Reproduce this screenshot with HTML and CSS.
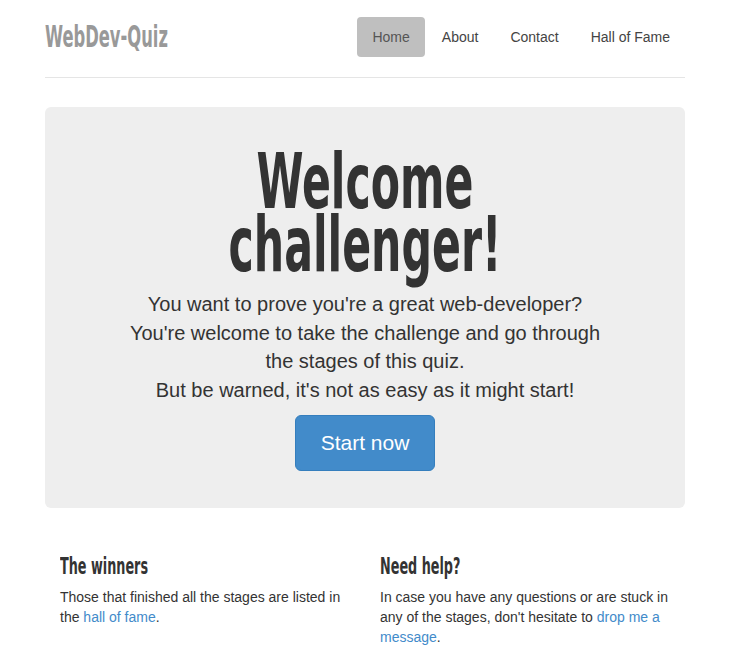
FILE: index.html
```html
<!DOCTYPE html>
<html lang="en">
<head>
    <meta charset="UTF-8">
    <meta name="viewport" content="width=device-width, initial-scale=1.0">
    <title>WebDev-Quiz</title>
    <link rel="stylesheet" href="styles.css">
</head>
<body>
    <div class="container">
        <header class="header">
            <h3 class="logo">WebDev-Quiz</h3>
            <nav>
                <ul class="nav-pills">
                    <li class="active"><a href="#">Home</a></li>
                    <li><a href="#">About</a></li>
                    <li><a href="#">Contact</a></li>
                    <li><a href="#">Hall of Fame</a></li>
                </ul>
            </nav>
        </header>

        <section class="jumbotron">
            <h1>Welcome challenger!</h1>
            <p class="lead">You want to prove you're a great web-developer?<br>You're welcome to take the challenge and go through the stages of this quiz.<br>But be warned, it's not as easy as it might start!</p>
            <div class="actions">
                <a class="btn" href="#">Start now</a>
            </div>
        </section>

        <section class="marketing">
            <div class="col">
                <h4>The winners</h4>
                <p>Those that finished all the stages are listed in the <a href="#">hall of fame</a>.</p>
            </div>
            <div class="col">
                <h4>Need help?</h4>
                <p>In case you have any questions or are stuck in any of the stages, don't hesitate to <a href="#">drop me a message</a>.</p>
            </div>
        </section>
    </div>
</body>
</html>
```

FILE: styles.css
```css
body {
    margin: 0;
    font-family: "Liberation Sans", Arial, sans-serif;
    font-size: 14px;
    line-height: 20px;
    color: #333;
    background: #fff;
}

a {
    color: #428bca;
    text-decoration: none;
}

.container {
    width: 640px;
    padding: 17px 0 0 45px;
}

/* condensed display font, squeezed to the tall Fjalla look */
.logo,
.jumbotron h1,
.marketing h4 {
    font-family: "Liberation Sans Narrow", "DejaVu Sans Condensed", sans-serif;
    font-weight: bold;
    transform: scale(0.79, 1.28);
}

.logo,
.marketing h4 {
    transform-origin: left center;
}

.header {
    display: flex;
    justify-content: space-between;
    align-items: center;
    padding-bottom: 20px;
    border-bottom: 1px solid #e5e5e5;
    margin-bottom: 29px;
}

.logo {
    margin: 0;
    font-size: 23px;
    line-height: 30px;
    color: #999;
}

.nav-pills {
    display: flex;
    list-style: none;
    margin: 0;
    padding: 0;
}

.nav-pills li {
    margin-left: 2px;
}

.nav-pills a {
    display: block;
    padding: 10px 15px;
    line-height: 20px;
    border-radius: 4px;
    color: #444;
}

.nav-pills .active a {
    background: #bfbfbf;
    color: #555;
}

.jumbotron {
    background: #eee;
    border-radius: 6px;
    padding: 57px 80px 37px;
    text-align: center;
}

.jumbotron h1 {
    margin: 0 0 29px;
    font-size: 60px;
    line-height: 48.5px;
    color: #333;
}

.jumbotron .lead {
    margin: 0 0 11px;
    font-size: 20px;
    line-height: 1.428571;
}

.actions {
    display: flex;
    justify-content: center;
}

.btn {
    display: inline-block;
    padding: 13px 25px;
    font-size: 21px;
    line-height: 28px;
    color: #fff;
    background: #428bca;
    border: 1px solid #357ebd;
    border-radius: 6px;
}

.marketing {
    display: grid;
    grid-template-columns: 1fr 1fr;
    margin-top: 48px;
}

.marketing .col {
    padding: 0 15px;
}

.marketing h4 {
    margin: 0 0 11px;
    font-size: 18px;
    line-height: 20px;
    color: #333;
}

.marketing p {
    margin: 0;
}
```
